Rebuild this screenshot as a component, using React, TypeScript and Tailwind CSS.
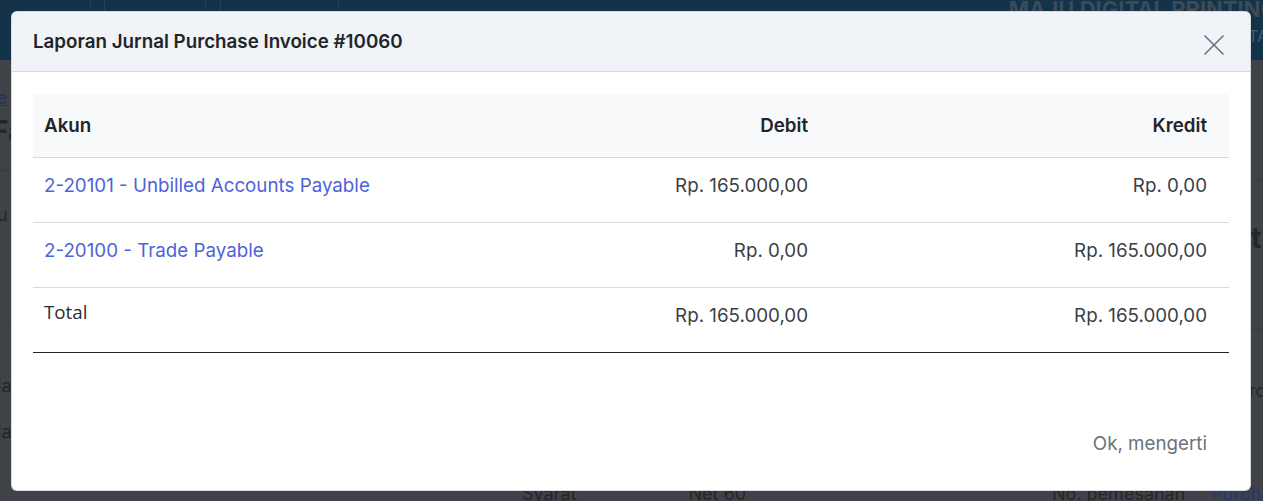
import React from "react";

const inter = { fontFamily: "Inter, 'Noto Sans', sans-serif" };

function Row({
  akun,
  debit,
  kredit,
}: {
  akun: string;
  debit: string;
  kredit: string;
}) {
  return (
    <div className="grid grid-cols-[387px_400px_409px] h-[65px] border-b border-[#d5d9e0] text-[18.75px] leading-[26px]">
      <div className="pl-[11px] pt-[15px] text-[#4d63d9] whitespace-nowrap">{akun}</div>
      <div className="pr-[12px] pt-[15px] text-right text-[#3a3f45] whitespace-nowrap">{debit}</div>
      <div className="pr-[22px] pt-[15px] text-right text-[#3a3f45] whitespace-nowrap">{kredit}</div>
    </div>
  );
}

export default function App() {
  return (
    <div
      className="relative w-[1263px] h-[501px] overflow-hidden bg-[#3f4247]"
      style={inter}
    >
      {/* dimmed background page */}
      <div className="flex flex-col">
        <div className="h-[60px] bg-[#143349] flex items-start">
          <div className="h-[60px] w-[91px] border-r border-[#253f55]" />
          <div className="h-[60px] w-[14px] border-r border-[#253f55]" />
          <div className="h-[60px] w-[101px] border-r border-[#253f55]" />
          <div className="h-[60px] w-[15px] border-r border-[#253f55]" />
          <div className="h-[60px] w-[118px] border-r border-[#253f55]" />
          <div className="flex-1" />
          <div className="flex flex-col items-end -mr-[14px] -mt-[4px]">
            <div className="text-[22px] font-bold leading-[26px] text-[#3d4a57] whitespace-nowrap">
              MAJU DIGITAL PRINTING
            </div>
            <div className="text-[16px] leading-[20px] mt-[4px] text-[#4c5966] whitespace-nowrap">
              DIGITAL
            </div>
          </div>
        </div>
        <div className="flex justify-between">
          <div className="flex flex-col w-[60px] -ml-[8px] text-[#23262a]">
            <div className="mt-[28px] text-[18px] leading-[20px] underline text-[#27325a]">
              {"\u00a0e"}
            </div>
            <div className="mt-[6px] text-[28px] leading-[34px] font-bold">Fa</div>
            <div className="mt-[22px] border-t border-[#36393d]" />
            <div className="mt-[32px] text-[18px] leading-[24px]">{"\u00a0u"}</div>
            <div className="mt-[96px] border-t border-dashed border-[#36393d]" />
            <div className="mt-[50px] text-[18px] leading-[24px]">{"\u00a0la"}</div>
            <div className="mt-[22px] text-[18px] leading-[24px]">{"\u00a0la"}</div>
          </div>
          <div className="flex flex-col w-[60px] items-start pl-[48px] text-[#23262a]">
            <div className="mt-[120px] w-[60px] -ml-[48px] border-t border-[#36393d]" />
            <div className="mt-[40px] text-[28px] leading-[34px] font-bold">t</div>
            <div className="mt-[74px] w-[60px] -ml-[48px] border-t border-[#36393d]" />
            <div className="mt-[49px] -ml-[2px] text-[18px] leading-[24px]">rc</div>
          </div>
        </div>
      </div>
      <div className="absolute left-0 right-0 top-[482px] flex text-[18px] leading-[24px] text-[#23262a] whitespace-nowrap">
        <div className="ml-[522px]">Syarat</div>
        <div className="ml-[112px]">Net 60</div>
        <div className="ml-[306px]">No. pemesanan</div>
        <div className="ml-[26px] text-[#2a3474]">Purchase</div>
      </div>

      {/* modal */}
      <div className="absolute left-[11px] top-[11px] w-[1240px] h-[480px] bg-white rounded-[6px] overflow-hidden flex flex-col border border-[#9ca3af]/40">
        <div className="h-[60px] bg-[#f0f3f8] border-b border-[#d3d7de] flex items-center justify-between pl-[21px] pr-[26px] shrink-0">
          <div className="text-[18.75px] font-semibold text-[#212529] leading-[26px]">
            Laporan Jurnal Purchase Invoice #10060
          </div>
          <svg width="20" height="20" viewBox="0 0 20 20" className="mt-[6px]">
            <path
              d="M1 1 L19 19 M19 1 L1 19"
              stroke="#6b7280"
              strokeWidth="1.6"
              strokeLinecap="round"
              fill="none"
            />
          </svg>
        </div>
        <div className="px-[21px] pt-[22px] flex flex-col flex-1">
          <div className="grid grid-cols-[387px_400px_409px] h-[64px] bg-[#f8f9fa] border-b border-[#d5d9e0] items-center text-[18.75px] font-semibold text-[#212529]">
            <div className="pl-[11px] pt-[1px]">Akun</div>
            <div className="pr-[12px] text-right pt-[1px]">Debit</div>
            <div className="pr-[22px] text-right pt-[1px]">Kredit</div>
          </div>
          <Row akun="2-20101 - Unbilled Accounts Payable" debit="Rp. 165.000,00" kredit="Rp. 0,00" />
          <Row akun="2-20100 - Trade Payable" debit="Rp. 0,00" kredit="Rp. 165.000,00" />
          <div className="grid grid-cols-[387px_400px_409px] h-[65px] border-b border-[#212529] text-[18.75px] leading-[26px] text-[#3a3f45] whitespace-nowrap">
            <div
              className="pl-[11px] pt-[11px] text-[#2b2f33]"
              style={{ fontFamily: "'Open Sans', 'Noto Sans', sans-serif" }}
            >
              Total
            </div>
            <div className="pr-[12px] pt-[15px] text-right">Rp. 165.000,00</div>
            <div className="pr-[22px] pt-[15px] text-right">Rp. 165.000,00</div>
          </div>
          <div className="flex-1 flex items-end justify-end pb-[33px] pr-[22px]">
            <div className="text-[18.75px] leading-[26px] text-[#6c737d]">Ok, mengerti</div>
          </div>
        </div>
      </div>
    </div>
  );
}
